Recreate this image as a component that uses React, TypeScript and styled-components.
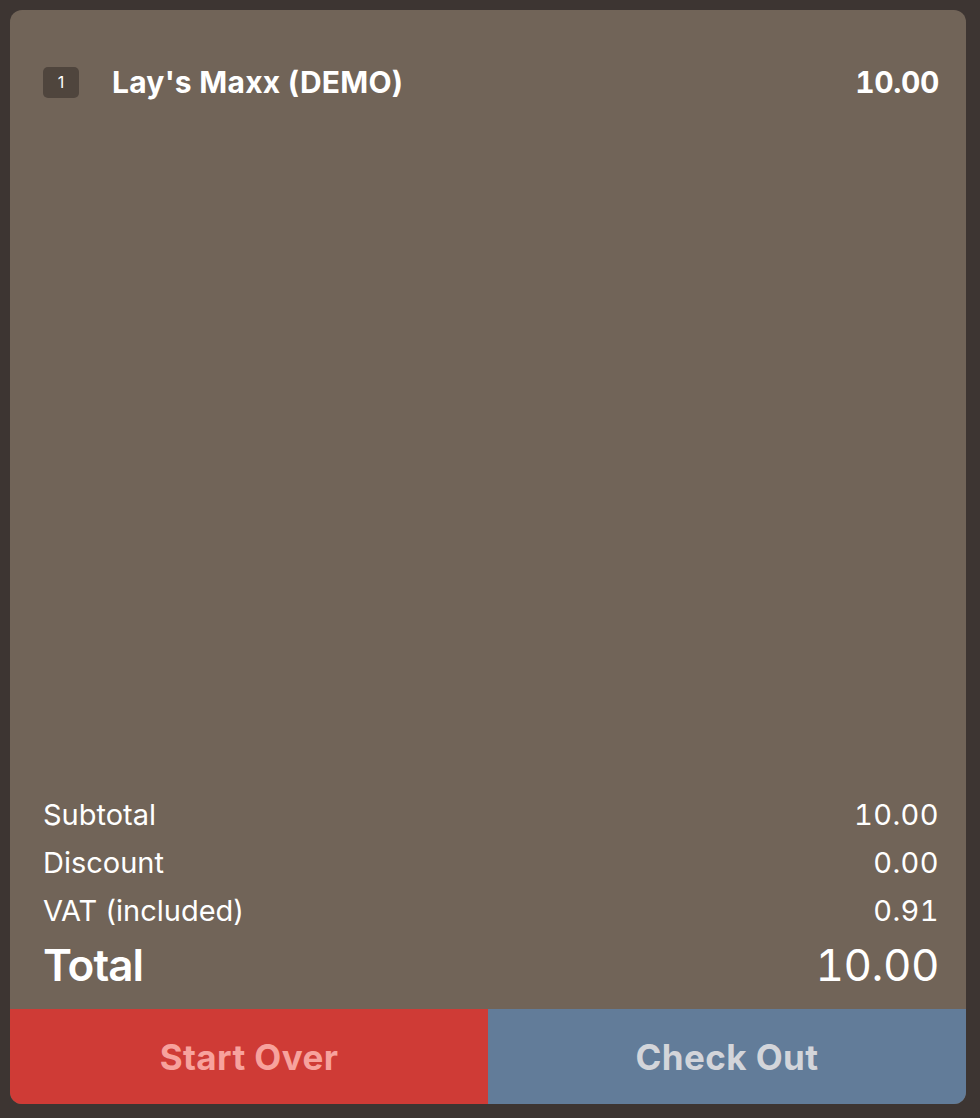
import styled, { createGlobalStyle } from "styled-components";

const GlobalStyle = createGlobalStyle`
  html, body {
    margin: 0;
    padding: 0;
    background: #3d3532;
  }
  body {
    font-family: Inter, "Noto Sans", sans-serif;
    -webkit-font-smoothing: antialiased;
  }
`;

const items = [{ qty: 1, name: "Lay's Maxx (DEMO)", price: "10.00" }];

const totals = [
  { label: "Subtotal", value: "10.00" },
  { label: "Discount", value: "0.00" },
  { label: "VAT (included)", value: "0.91" },
];

const App: React.FC = () => {
  return (
    <>
      <GlobalStyle />
      <Page>
        <Card>
          <ItemList>
            {items.map((item) => (
              <ItemRow key={item.name}>
                <Qty>{item.qty}</Qty>
                <ItemName>{item.name}</ItemName>
                <ItemPrice>{item.price}</ItemPrice>
              </ItemRow>
            ))}
          </ItemList>

          <Summary>
            {totals.map((t) => (
              <SummaryRow key={t.label}>
                <span>{t.label}</span>
                <Amount>{t.value}</Amount>
              </SummaryRow>
            ))}
            <TotalRow>
              <TotalLabel>Total</TotalLabel>
              <TotalAmount>10.00</TotalAmount>
            </TotalRow>
          </Summary>

          <Actions>
            <ActionButton tone="danger">Start Over</ActionButton>
            <ActionButton tone="primary">Check Out</ActionButton>
          </Actions>
        </Card>
      </Page>
    </>
  );
};

const Page = styled.div`
  height: 1118px;
  padding: 10px 14px 14px 10px;
  box-sizing: border-box;
  display: flex;
`;

const Card = styled.div`
  flex: 1;
  display: flex;
  flex-direction: column;
  background: #716458;
  border-radius: 12px;
  overflow: hidden;
  color: #ffffff;
`;

const ItemList = styled.div`
  flex: 1;
  padding: 54px 27px 0 33px;
`;

const ItemRow = styled.div`
  display: flex;
  align-items: center;
  height: 36px;
`;

const Qty = styled.div`
  width: 36px;
  height: 31px;
  border-radius: 5px;
  background: #4f453d;
  font-size: 16px;
  display: flex;
  align-items: center;
  justify-content: center;
  margin-right: 33px;
`;

const ItemName = styled.div`
  flex: 1;
  font-size: 30px;
  font-weight: 700;
  letter-spacing: 0.25px;
`;

const ItemPrice = styled.div`
  font-size: 30px;
  font-weight: 700;
  letter-spacing: -0.4px;
  font-variant-numeric: tabular-nums;
`;

const Summary = styled.div`
  padding: 0 27px 14px 33px;
`;

const SummaryRow = styled.div`
  display: flex;
  justify-content: space-between;
  align-items: baseline;
  font-size: 29px;
  font-weight: 400;
  line-height: 48px;
`;

const Amount = styled.span`
  font-variant-numeric: tabular-nums;
  letter-spacing: 0.4px;
`;

const TotalRow = styled(SummaryRow)`
  font-size: 44px;
  line-height: 60px;
`;

const TotalLabel = styled.span`
  font-weight: 600;
  letter-spacing: -1px;
`;

const TotalAmount = styled.span`
  font-weight: 400;
  font-variant-numeric: tabular-nums;
  letter-spacing: -0.5px;
`;

const Actions = styled.div`
  display: flex;
  height: 95px;
`;

const ActionButton = styled.button<{ tone: "danger" | "primary" }>`
  flex: 1;
  border: none;
  margin: 0;
  padding: 0;
  font-family: inherit;
  font-size: 35px;
  font-weight: 700;
  letter-spacing: 0.4px;
  cursor: pointer;
  background: ${({ tone }) => (tone === "danger" ? "#cf3b36" : "#627c99")};
  color: ${({ tone }) => (tone === "danger" ? "#f7a29d" : "#d3d5da")};
`;

export default App;
